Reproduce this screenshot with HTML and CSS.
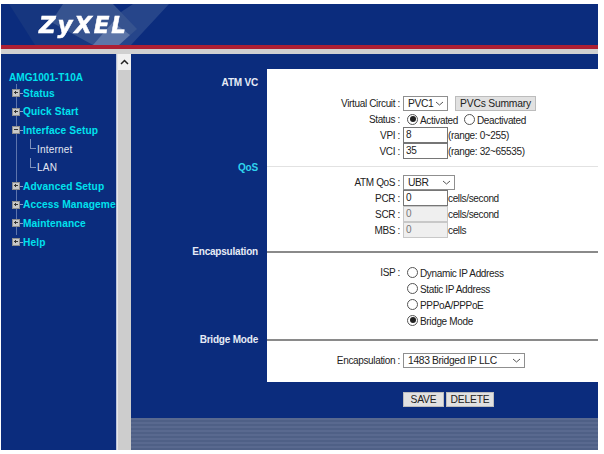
FILE: index.html
```html
<!DOCTYPE html>
<html lang="en">
<head>
<meta charset="utf-8">
<title>ZyXEL AMG1001-T10A</title>
<link rel="stylesheet" href="styles.css">
</head>
<body>
<div class="app">
  <header class="banner">
    <svg class="banner-art" width="597" height="41" viewBox="0 0 597 41" aria-hidden="true">
      <polygon points="8,0 62,0 92,41 34,41" fill="#16367f"/>
      <polygon points="132,0 168,0 130,41 118,41 128,27 114,12" fill="#26458a"/>
      <polygon points="62,0 112,0 136,25 118,41 92,41 50,18" fill="#36538f"/>
      <polygon points="92,41 118,41 129,31 112,18" fill="#5d76a8"/>
    </svg>
    <div class="logo">ZyXEL</div>
  </header>
  <div class="red-bar"></div>
  <div class="gray-bar"></div>
  <div class="body-row">
    <nav class="sidebar">
      <div class="device">AMG1001-T10A</div>
      <ul class="tree">
        <li class="node"><span class="box plus"></span><span class="stub"></span>Status</li>
        <li class="node"><span class="box plus"></span><span class="stub"></span>Quick Start</li>
        <li class="node"><span class="box minus"></span><span class="stub"></span>Interface Setup</li>
        <li class="leaf"><span class="elbow"></span>Internet</li>
        <li class="leaf last"><span class="elbow"></span>LAN</li>
        <li class="node"><span class="box plus"></span><span class="stub"></span>Advanced Setup</li>
        <li class="node"><span class="box plus"></span><span class="stub"></span>Access Management</li>
        <li class="node"><span class="box plus"></span><span class="stub"></span>Maintenance</li>
        <li class="node"><span class="box plus"></span><span class="stub"></span>Help</li>
      </ul>
    </nav>
    <div class="scrollbar">
      <div class="scroll-up">
        <svg width="9" height="6" viewBox="0 0 9 6" aria-hidden="true"><path d="M1 5 L4.500 1.500 L8 5" fill="none" stroke="#222" stroke-width="1.500"/></svg>
      </div>
    </div>
    <main class="content">
      <section class="section sec-atm">
        <h2 class="side-label">ATM VC</h2>
        <div class="panel">
          <div class="row"><span class="lbl">Virtual Circuit :</span>
            <span class="ctl"><span class="select sel-pvc">PVC1<svg class="chev" width="9" height="5" viewBox="0 0 9 5"><path d="M1 1 L4.500 4 L8 1" fill="none" stroke="#555"/></svg></span><button class="btn btn-summary" type="button">PVCs Summary</button></span></div>
          <div class="row"><span class="lbl">Status :</span>
            <span class="ctl radios"><span class="radio on"></span><span class="rtext">Activated</span><span class="radio"></span><span class="rtext">Deactivated</span></span></div>
          <div class="row"><span class="lbl">VPI :</span>
            <span class="ctl"><span class="input">8</span><span class="hint">(range: 0~255)</span></span></div>
          <div class="row"><span class="lbl">VCI :</span>
            <span class="ctl"><span class="input">35</span><span class="hint">(range: 32~65535)</span></span></div>
        </div>
      </section>
      <section class="section sec-qos">
        <h2 class="side-label qos">QoS</h2>
        <div class="panel rule-light">
          <div class="row"><span class="lbl">ATM QoS :</span>
            <span class="ctl"><span class="select sel-ubr">UBR<svg class="chev" width="9" height="5" viewBox="0 0 9 5"><path d="M1 1 L4.500 4 L8 1" fill="none" stroke="#555"/></svg></span></span></div>
          <div class="row"><span class="lbl">PCR :</span>
            <span class="ctl"><span class="input">0</span><span class="hint">cells/second</span></span></div>
          <div class="row"><span class="lbl">SCR :</span>
            <span class="ctl"><span class="input off">0</span><span class="hint">cells/second</span></span></div>
          <div class="row"><span class="lbl">MBS :</span>
            <span class="ctl"><span class="input off">0</span><span class="hint">cells</span></span></div>
        </div>
      </section>
      <section class="section sec-enc">
        <h2 class="side-label">Encapsulation</h2>
        <div class="panel rule-dark">
          <div class="row"><span class="lbl">ISP :</span>
            <span class="ctl radios"><span class="radio"></span><span class="rtext">Dynamic IP Address</span></span></div>
          <div class="row"><span class="lbl"></span>
            <span class="ctl radios"><span class="radio"></span><span class="rtext">Static IP Address</span></span></div>
          <div class="row"><span class="lbl"></span>
            <span class="ctl radios"><span class="radio"></span><span class="rtext">PPPoA/PPPoE</span></span></div>
          <div class="row"><span class="lbl"></span>
            <span class="ctl radios"><span class="radio on"></span><span class="rtext">Bridge Mode</span></span></div>
        </div>
      </section>
      <section class="section sec-bridge">
        <h2 class="side-label">Bridge Mode</h2>
        <div class="panel rule-dark">
          <div class="row"><span class="lbl">Encapsulation :</span>
            <span class="ctl"><span class="select sel-enc">1483 Bridged IP LLC<svg class="chev" width="9" height="5" viewBox="0 0 9 5"><path d="M1 1 L4.500 4 L8 1" fill="none" stroke="#555"/></svg></span></span></div>
        </div>
      </section>
      <div class="actions">
        <button class="btn btn-save" type="button">SAVE</button>
        <button class="btn btn-delete" type="button">DELETE</button>
      </div>
      <div class="stripes"></div>
    </main>
  </div>
</div>
</body>
</html>
```
FILE: styles.css
```css
* { box-sizing: border-box; }
html, body { margin: 0; padding: 0; background: #fff; }
body {
  width: 604px;
  height: 454px;
  overflow: hidden;
  font-family: "Liberation Sans", Arial, sans-serif;
  font-size: 10px;
  letter-spacing: -0.350px;
  color: #222;
}
.app {
  width: 597px;
  height: 446px;
  margin: 4px 0 0 1px;
  display: flex;
  flex-direction: column;
  filter: blur(0.3px);
}
.banner {
  position: relative;
  height: 41px;
  background: #0b2c7d;
  overflow: hidden;
}
.banner-art { position: absolute; left: 0; top: 0; }
.logo {
  position: relative;
  padding: 2px 0 0 38px;
  font-family: "DejaVu Sans", sans-serif;
  font-size: 23px;
  line-height: 38px;
  font-weight: bold;
  font-style: italic;
  letter-spacing: 1.800px;
  -webkit-text-stroke: 0.5px #fff;
  color: #fff;
}
.red-bar { height: 4px; background: #ad1f33; }
.gray-bar { height: 5px; background: #d0d0d0; }
.body-row { flex: 1; display: flex; min-height: 0; }

.sidebar {
  width: 116px;
  background: #0b2c7d;
  border-right: 1px solid #b9c3dc;
  overflow: hidden;
  white-space: nowrap;
  padding: 17px 0 0 8px;
  letter-spacing: 0;
}
.device {
  color: #00e2ee;
  font-weight: bold;
  font-size: 10.100px;
  line-height: 13px;
}
.tree {
  list-style: none;
  margin: 0;
  padding: 0;
  position: relative;
}
.tree::before {
  content: "";
  position: absolute;
  left: 7px;
  top: 0;
  height: 151px;
  width: 1px;
  background: #5d74ad;
}
.node, .leaf {
  position: relative;
  display: flex;
  align-items: center;
  height: 18.600px;
}
.node {
  color: #00e2ee;
  font-weight: bold;
  font-size: 10.200px;
  letter-spacing: 0.100px;
}
.leaf {
  color: #e4e8f2;
  font-weight: normal;
  font-size: 10px;
  padding-left: 28px;
  letter-spacing: 0.200px;
}
.box {
  position: relative;
  width: 8px;
  height: 8px;
  margin-left: 3px;
  background: #c8c8c8;
  border: 1px solid #8d8d8d;
  flex: none;
}
.box::before {
  content: "";
  position: absolute;
  left: 1px;
  top: 2px;
  width: 4px;
  height: 1px;
  background: #333;
}
.box.plus::after {
  content: "";
  position: absolute;
  left: 2px;
  top: 1px;
  width: 1px;
  height: 3px;
  background: #333;
}
.stub { width: 3px; height: 1px; background: #8d9fc8; flex: none; }
.elbow {
  position: absolute;
  left: 21px;
  top: -1px;
  width: 6px;
  height: 10px;
  border-left: 1px solid #7d90bd;
  border-bottom: 1px solid #7d90bd;
}
.last .elbow { top: 0; }

.scrollbar {
  width: 14px;
  background: #cdcdcd;
  border-left: 1px solid #e6e6e6;
}
.scroll-up {
  height: 16px;
  background: #f0f0f0;
  display: flex;
  align-items: center;
  justify-content: center;
}

.content {
  width: 467px;
  background: #0b2c7d;
  display: flex;
  flex-direction: column;
  padding-top: 15px;
}
.section { display: grid; grid-template-columns: 136px 331px; }
.sec-atm { height: 97px; }
.sec-qos { height: 85px; }
.sec-enc { height: 88px; }
.sec-bridge { height: 43px; }
.side-label {
  margin: 0;
  padding: 7px 9px 0 0;
  text-align: right;
  font-size: 10px;
  letter-spacing: -0.200px;
  line-height: 13px;
  font-weight: bold;
  color: #e6ebf6;
}
.sec-enc .side-label, .sec-bridge .side-label { padding-top: 0; margin-top: -6px; }
.sec-qos .side-label.qos { padding-top: 0; color: #2fd4ee; margin-top: -5px; }
.panel { background: #fff; }
.sec-atm .panel { padding-top: 26px; }
.rule-light { border-top: 1px solid #e2e2e2; padding-top: 7px; }
.rule-dark { border-top: 2px solid #8a8a8a; }
.sec-enc .panel { padding-top: 11px; }
.sec-bridge .panel { padding-top: 11px; }
.row {
  display: grid;
  grid-template-columns: 133px 1fr;
  column-gap: 3px;
  align-items: center;
  height: 16px;
}
.lbl { text-align: right; white-space: nowrap; }
.ctl { display: flex; align-items: center; white-space: nowrap; }
.select {
  display: flex;
  align-items: center;
  justify-content: space-between;
  height: 15px;
  padding: 0 3px 0 4px;
  background: #fff;
  border: 1px solid #8f8f8f;
  font-size: 10.300px;
}
.sel-pvc { width: 45px; }
.sel-ubr { width: 52px; }
.sel-enc { width: 122px; }
.btn {
  height: 15px;
  padding: 0;
  background: #e1e1e1;
  border: 1px solid #bcbcbc;
  font: 10.300px "Liberation Sans", Arial, sans-serif;
  letter-spacing: -0.200px;
  color: #222;
}
.btn-summary { width: 81px; margin-left: 7px; }
.input {
  display: block;
  width: 45px;
  height: 16px;
  padding-left: 2px;
  line-height: 14px;
  border: 1px solid #767676;
  background: #fff;
  font-size: 10px;
}
.input.off {
  background: #efefef;
  border-color: #c8c8c8;
  color: #777;
}
.hint { margin-left: 0; }
.radio {
  position: relative;
  flex: none;
  width: 11px;
  height: 11px;
  margin: 0 2px 0 4px;
  border: 1px solid #555;
  border-radius: 50%;
  background: #fff;
}
.radio.on::after {
  content: "";
  position: absolute;
  left: 1.500px;
  top: 1.500px;
  width: 6px;
  height: 6px;
  border-radius: 50%;
  background: #222;
}
.rtext { position: relative; top: 1px; }
.rtext + .radio { margin-left: 6px; }
.actions {
  height: 36px;
  padding: 10px 0 0 272px;
  display: flex;
  gap: 2px;
  align-items: flex-start;
}
.btn-save { width: 41px; height: 15px; }
.btn-delete { width: 48px; height: 15px; }
.stripes {
  flex: 1;
  background: repeating-linear-gradient(to bottom, #59698f 0, #59698f 2px, #4f6086 2px, #4f6086 4px);
}
```
